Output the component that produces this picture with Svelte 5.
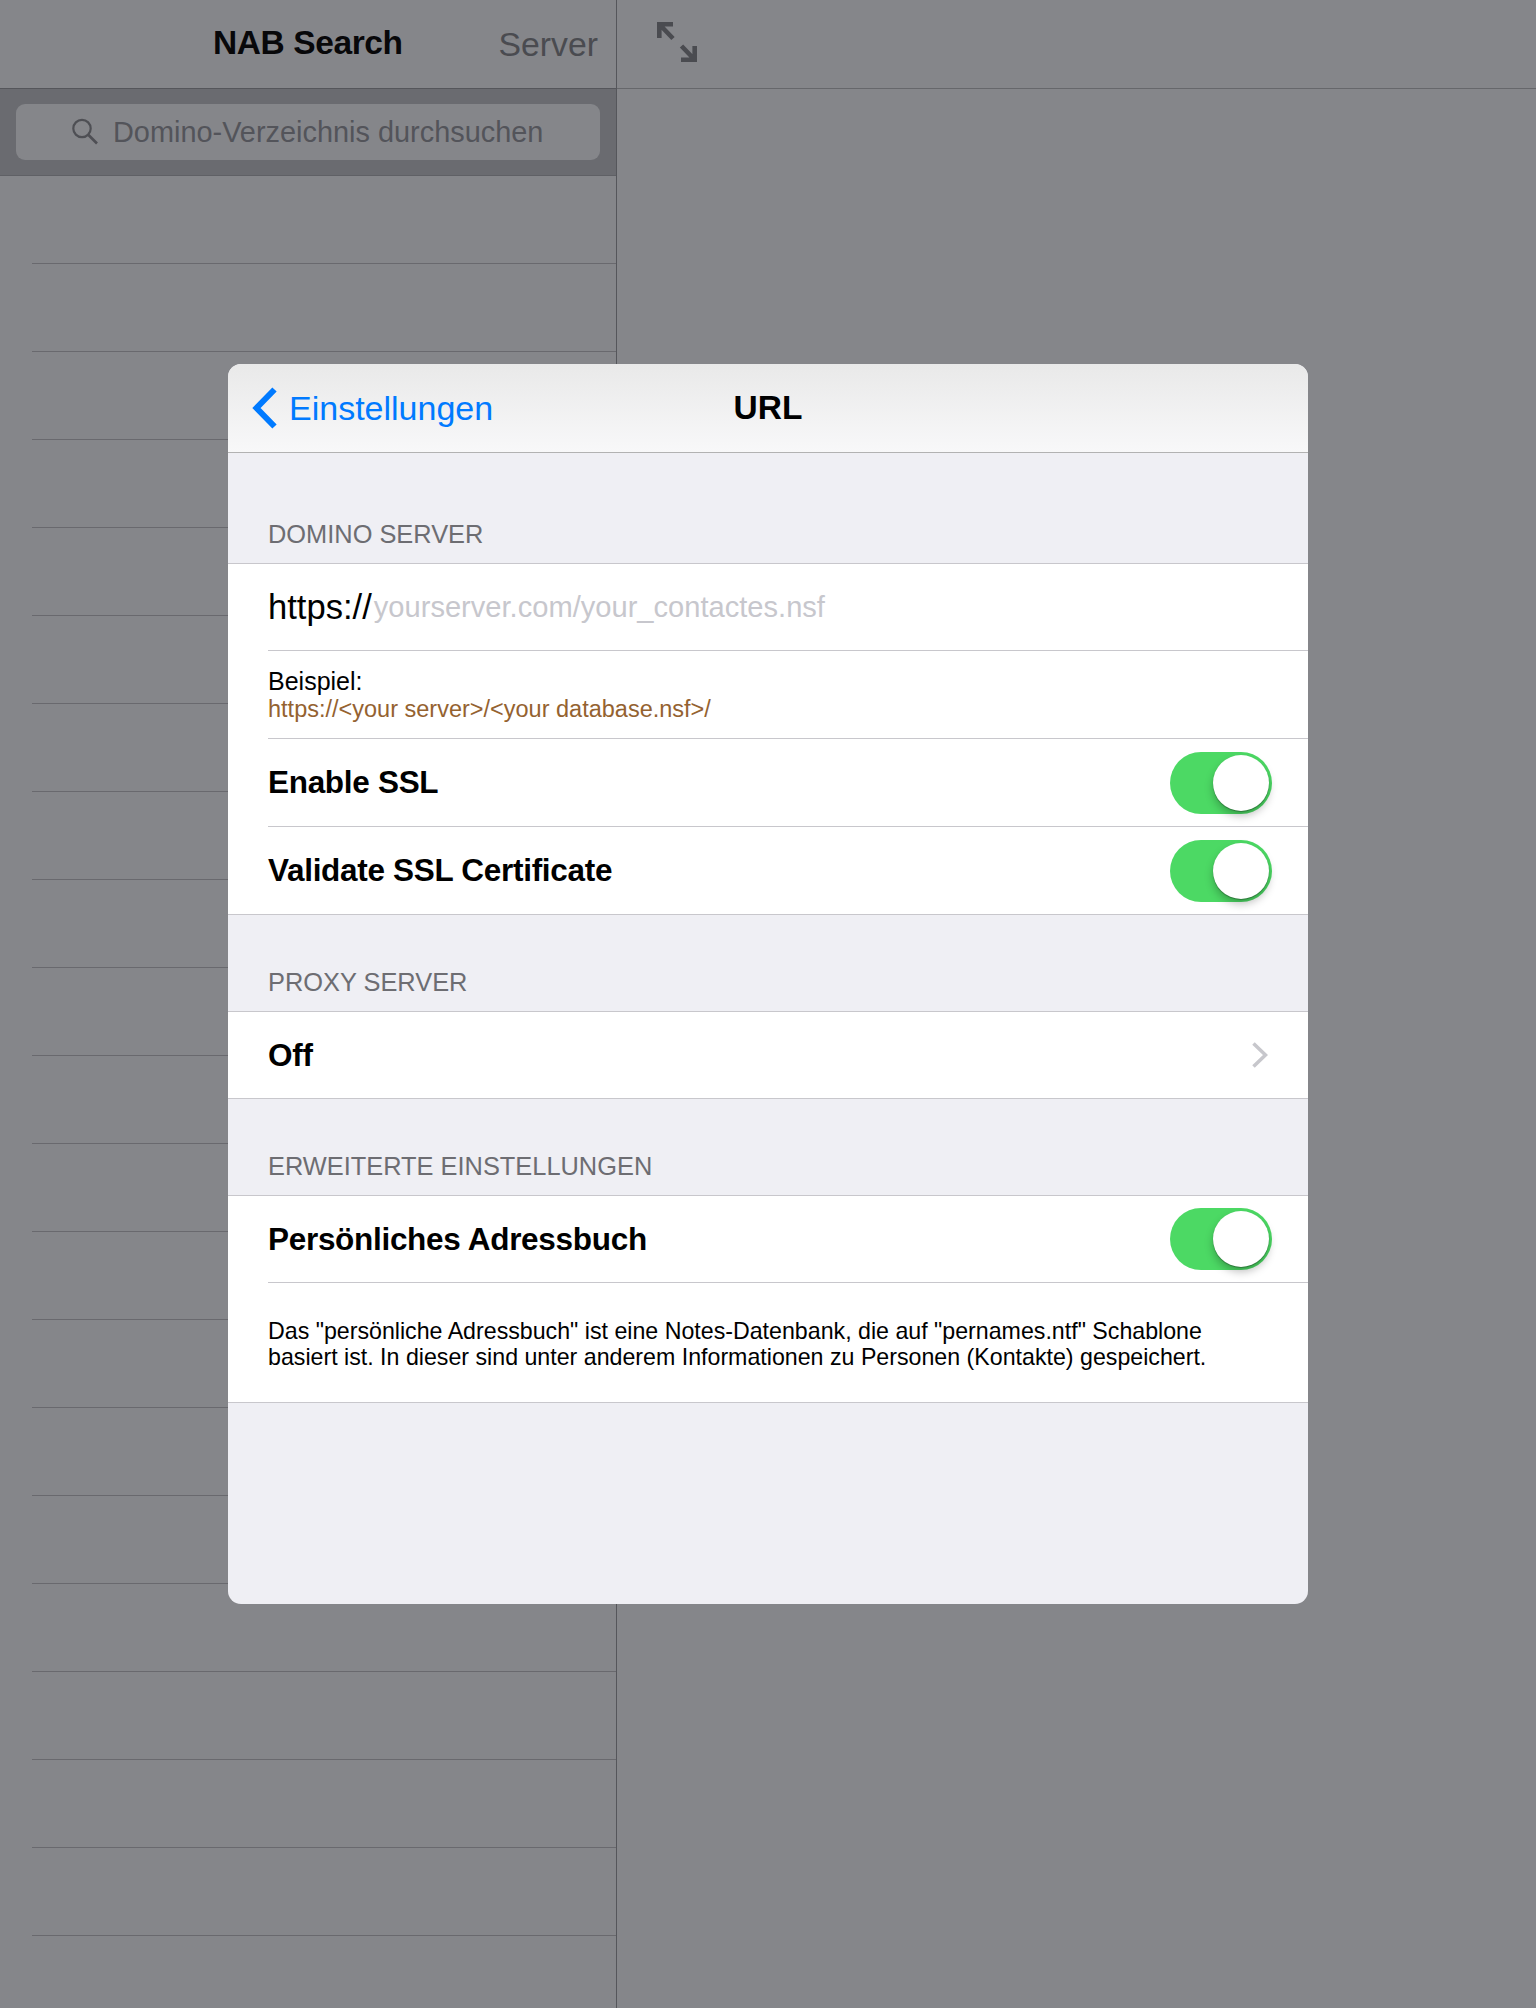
<script>
  // empty rows behind the dimmed list
  const listRows = Array.from({ length: 20 }, (_, i) => i);
</script>

<div class="page">
  <aside class="sidebar">
    <header class="side-nav">
      <span class="side-title">NAB Search</span>
      <span class="side-action">Server</span>
    </header>
    <div class="search-band">
      <div class="search-field">
        <svg class="search-icon" viewBox="0 0 28 28" width="28" height="28" aria-hidden="true">
          <circle cx="10" cy="10.500" r="8.700" fill="none" stroke="#4e4f54" stroke-width="2.200" />
          <path d="M16.500 17l8.500 8.500" fill="none" stroke="#4e4f54" stroke-width="2.600" />
        </svg>
        <span>Domino-Verzeichnis durchsuchen</span>
      </div>
    </div>
    <div class="list">
      {#each listRows as row (row)}
        <div class="list-row"></div>
      {/each}
    </div>
  </aside>

  <main class="detail">
    <header class="detail-nav">
      <svg class="expand" viewBox="0 0 40 40" width="40" height="40" aria-hidden="true">
        <path d="M16 2.300H2.300V16M4 4l12 12.500" fill="none" stroke="#4a4b50" stroke-width="4.600" />
        <path d="M24 37.700h13.700V24M36 36L24.500 24" fill="none" stroke="#4a4b50" stroke-width="4.600" />
      </svg>
    </header>
  </main>

  <section class="modal">
    <header class="modal-nav">
      <div class="back">
        <svg viewBox="0 0 26 42" width="26" height="42" aria-hidden="true">
          <path d="M22.500 2.500L4.500 21l18 18.500" fill="none" stroke="#007aff" stroke-width="6" />
        </svg>
        <span>Einstellungen</span>
      </div>
      <span class="modal-title">URL</span>
    </header>

    <h2 class="section first">DOMINO SERVER</h2>
    <div class="group">
      <div class="row">
        <span class="url-scheme">https://</span><span class="url-placeholder">yourserver.com/your_contactes.nsf</span>
      </div>
      <div class="row example">
        <span>Beispiel:</span>
        <span class="example-url">https://&lt;your server&gt;/&lt;your database.nsf&gt;/</span>
      </div>
      <div class="row">
        <span class="label">Enable SSL</span>
        <span class="toggle"><span class="knob"></span></span>
      </div>
      <div class="row last">
        <span class="label">Validate SSL Certificate</span>
        <span class="toggle"><span class="knob"></span></span>
      </div>
    </div>

    <h2 class="section">PROXY SERVER</h2>
    <div class="group">
      <div class="row last">
        <span class="label">Off</span>
        <svg class="chevron" viewBox="0 0 16 26" width="16" height="26" aria-hidden="true">
          <path d="M1.500 1.500L13.500 13 1.500 24.500" fill="none" stroke="#c7c7cc" stroke-width="3.600" />
        </svg>
      </div>
    </div>

    <h2 class="section">ERWEITERTE EINSTELLUNGEN</h2>
    <div class="group">
      <div class="row">
        <span class="label">Persönliches Adressbuch</span>
        <span class="toggle"><span class="knob"></span></span>
      </div>
      <div class="row last note">
        <p>Das "persönliche Adressbuch" ist eine Notes-Datenbank, die auf "pernames.ntf" Schablone<br />basiert ist. In dieser sind unter anderem Informationen zu Personen (Kontakte) gespeichert.</p>
      </div>
    </div>
  </section>
</div>

<style>
  :global(body) {
    margin: 0;
    font-family: "Liberation Sans", Arial, sans-serif;
  }

  .page {
    position: relative;
    display: flex;
    height: 2008px;
    overflow: hidden;
    background: #85868a;
  }

  .sidebar {
    width: 616px;
    flex: none;
    border-right: 1px solid #55565b;
  }

  .side-nav {
    position: relative;
    display: flex;
    align-items: center;
    justify-content: flex-end;
    box-sizing: border-box;
    height: 89px;
    padding: 0 18px 0 0;
    border-bottom: 1px solid #55565b;
  }

  .side-title {
    position: absolute;
    left: 213px;
    top: 24px;
    font-size: 33.500px;
    font-weight: 700;
    letter-spacing: -0.4px;
    color: #08080a;
  }

  .side-action {
    font-size: 33.800px;
    color: #4a4b50;
  }

  .search-band {
    box-sizing: border-box;
    height: 87px;
    padding: 15px 16px 0;
    background: #6a6b70;
    border-bottom: 1px solid #5f6065;
  }

  .search-field {
    display: flex;
    align-items: center;
    gap: 13px;
    box-sizing: border-box;
    height: 56px;
    padding-left: 56px;
    border-radius: 9px;
    background: #85868a;
    font-size: 28.900px;
    color: #53545a;
  }

  .list-row {
    box-sizing: border-box;
    height: 88px;
    margin-left: 32px;
    border-bottom: 1px solid #69696e;
  }

  .detail {
    flex: 1;
  }

  .detail-nav {
    box-sizing: border-box;
    height: 89px;
    padding: 22px 0 0 40px;
    border-bottom: 1px solid #66676b;
  }

  .expand {
    display: block;
  }

  .modal {
    position: absolute;
    left: 228px;
    top: 364px;
    width: 1080px;
    height: 1240px;
    overflow: hidden;
    border-radius: 13px;
    background: #efeff4;
  }

  .modal-nav {
    position: relative;
    display: flex;
    align-items: center;
    justify-content: center;
    box-sizing: border-box;
    height: 89px;
    border-bottom: 1px solid #b2b2b2;
    background: linear-gradient(#e9e9e9, #f8f8f9);
  }

  .back {
    position: absolute;
    left: 24px;
    top: 0;
    bottom: 0;
    display: flex;
    align-items: center;
    gap: 11px;
    font-size: 34px;
    color: #007aff;
  }

  .back svg {
    display: block;
  }

  .modal-title {
    font-size: 33.500px;
    font-weight: 700;
    color: #000;
  }

  .section {
    display: flex;
    align-items: flex-end;
    box-sizing: border-box;
    height: 96px;
    margin: 0;
    padding: 0 0 13px 40px;
    font-size: 25.400px;
    font-weight: 400;
    line-height: 32px;
    color: #6d6d72;
  }

  .section.first {
    height: 110px;
  }

  .group {
    border-top: 1px solid #c8c7cc;
    background: #fff;
  }

  .row {
    display: flex;
    align-items: center;
    justify-content: space-between;
    box-sizing: border-box;
    height: 88px;
    margin-left: 40px;
    padding-right: 36px;
    border-bottom: 1px solid #c8c7cc;
  }

  .row:first-child {
    height: 87px;
    justify-content: flex-start;
  }

  .row:first-child:has(.toggle),
  .row:first-child:has(.chevron) {
    justify-content: space-between;
  }

  .row.last {
    margin-left: 0;
    padding-left: 40px;
  }

  .url-scheme {
    font-size: 34.600px;
    color: #000;
  }

  .url-placeholder {
    margin-left: 2px;
    font-size: 29.100px;
    color: #c7c7cd;
  }

  .example {
    flex-direction: column;
    align-items: flex-start;
    justify-content: center;
    font-size: 25px;
    line-height: 28px;
    color: #000;
  }

  .example-url {
    font-size: 23.500px;
    color: #946230;
  }

  .label {
    font-size: 31.500px;
    font-weight: 700;
    letter-spacing: -0.3px;
    color: #000;
  }

  .toggle {
    display: block;
    position: relative;
    box-sizing: border-box;
    width: 102px;
    height: 62px;
    border-radius: 31px;
    background: #4cd964;
  }

  .knob {
    position: absolute;
    right: 3px;
    top: 3px;
    width: 56px;
    height: 56px;
    border-radius: 50%;
    background: #fff;
    box-shadow: 0 5px 8px rgba(0, 0, 0, 0.25), 0 1px 1px rgba(0, 0, 0, 0.3);
  }

  .chevron {
    display: block;
    margin-right: 4px;
  }

  .note {
    height: 120px;
    align-items: flex-start;
  }

  .note p {
    margin: 35px 0 0;
    font-size: 23.200px;
    line-height: 26px;
    color: #000;
  }
</style>
